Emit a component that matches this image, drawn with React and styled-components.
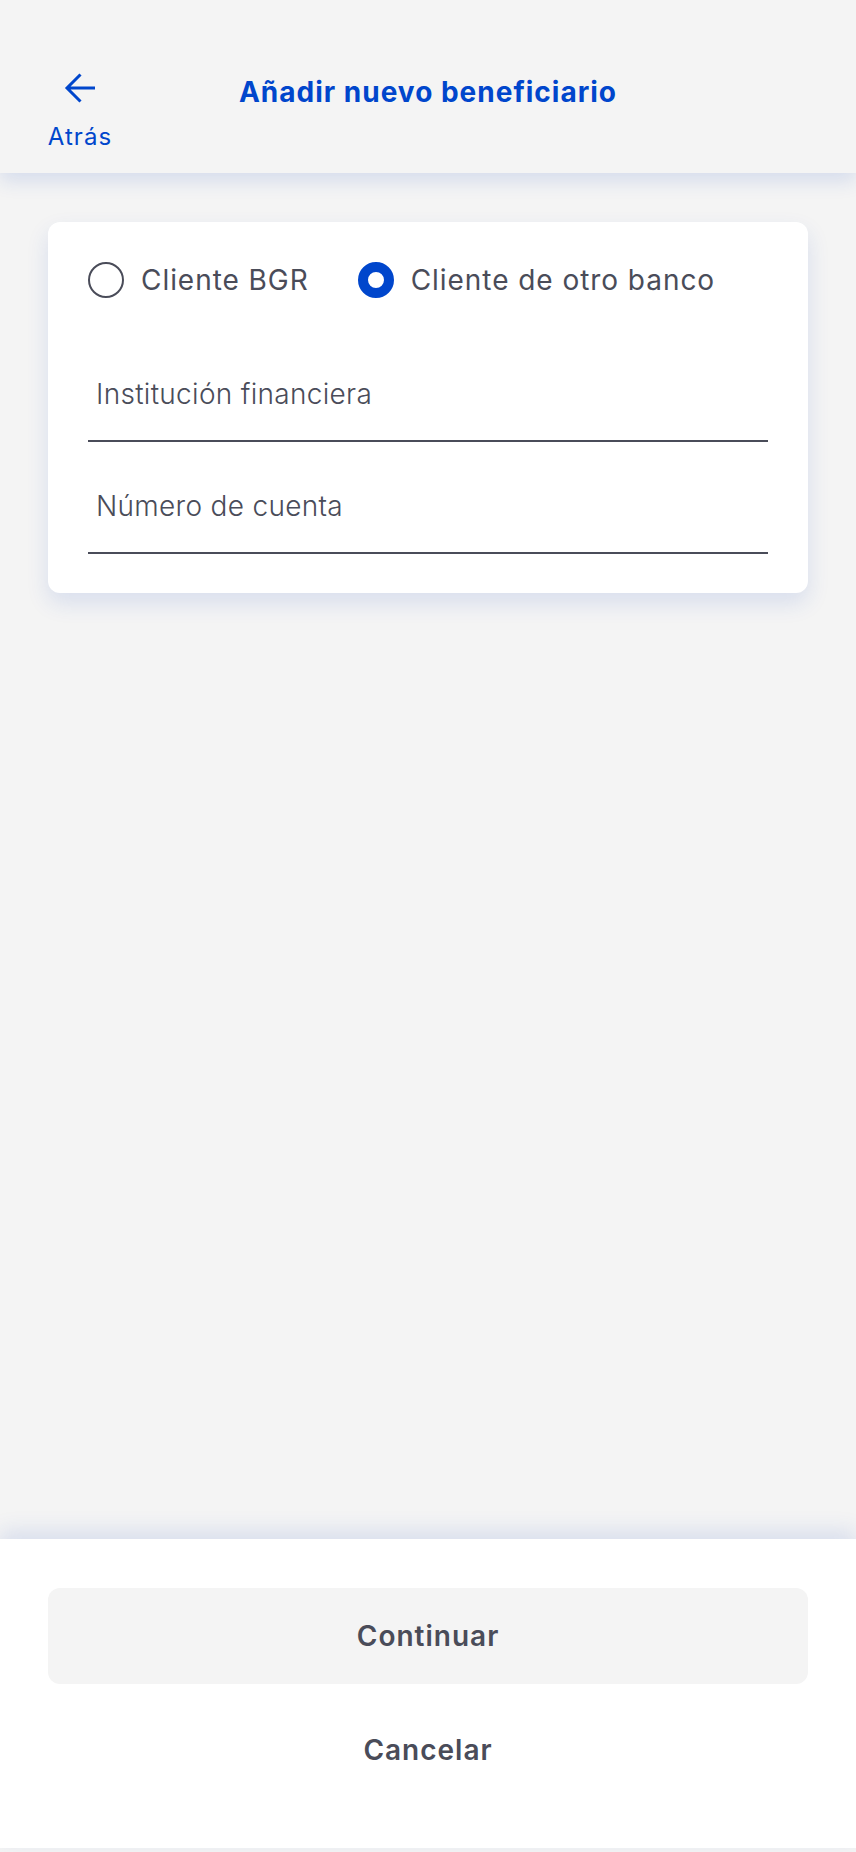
import React, { useState } from 'react';
import styled, { createGlobalStyle } from 'styled-components';

const GlobalStyle = createGlobalStyle`
  html, body {
    margin: 0;
    padding: 0;
    background: #f4f4f4;
  }
  body {
    font-family: "Inter", "Open Sans", sans-serif;
    color: #4a4c59;
  }
  * { box-sizing: border-box; }
`;

const BackArrow = () => (
    <svg width="32" height="32" viewBox="0 0 32 32" fill="none">
        <path d="M31 16H3M16.5 2.5L3 16l13.5 13.5" stroke="#0046cc" strokeWidth="3" />
    </svg>
);

const App = () => {
    const [kind, setKind] = useState("otro");

    return (
        <Page>
            <GlobalStyle />
            <Header>
                <BackButton type="button">
                    <BackArrow />
                    <BackLabel>Atrás</BackLabel>
                </BackButton>
                <Title>Añadir nuevo beneficiario</Title>
                <span />
            </Header>

            <Content>
                <Card>
                    <RadioRow>
                        <RadioOption onClick={() => setKind("bgr")}>
                            <RadioDot checked={kind === "bgr"} />
                            <span>Cliente BGR</span>
                        </RadioOption>
                        <RadioOption onClick={() => setKind("otro")}>
                            <RadioDot checked={kind === "otro"} />
                            <span>Cliente de otro banco</span>
                        </RadioOption>
                    </RadioRow>
                    <Field first>
                        <FieldInput placeholder="Institución financiera" />
                    </Field>
                    <Field>
                        <FieldInput placeholder="Número de cuenta" />
                    </Field>
                </Card>
            </Content>

            <Footer>
                <PrimaryButton type="button">Continuar</PrimaryButton>
                <GhostButton type="button">Cancelar</GhostButton>
            </Footer>
        </Page>
    );
}

export default App;

const Page = styled.div`
display: flex;
flex-direction: column;
min-height: 100vh;
background: #f4f4f4;
padding-bottom: 4px;
`;

const Header = styled.header`
display: grid;
grid-template-columns: 1fr auto 1fr;
align-items: start;
height: 173px;
padding: 72px 48px 0;
background: #f4f4f4;
box-shadow: 0 8px 18px rgba(30, 80, 190, 0.14);
position: relative;
z-index: 1;
`;

const BackButton = styled.button`
justify-self: start;
display: flex;
flex-direction: column;
align-items: center;
gap: 18px;
width: 64px;
padding: 0;
border: none;
background: none;
font-family: inherit;
cursor: pointer;
`;

const BackLabel = styled.span`
font-size: 24px;
line-height: 29px;
font-weight: 400;
color: #0046cc;
letter-spacing: 1.1px;
`;

const Title = styled.h1`
margin: 3px 0 0;
font-size: 28px;
line-height: 34px;
font-weight: 700;
color: #0046cc;
letter-spacing: 1px;
`;

const Content = styled.main`
flex: 1;
padding: 49px 48px;
`;

const Card = styled.section`
background: #fff;
border-radius: 12px;
padding: 40px 40px 39px;
box-shadow: 0 10px 22px rgba(30, 80, 190, 0.13);
`;

const RadioRow = styled.div`
display: flex;
align-items: center;
gap: 49px;
`;

const RadioOption = styled.label`
display: flex;
align-items: center;
gap: 17px;
font-size: 28px;
line-height: 34px;
font-weight: 400;
letter-spacing: 0.95px;
color: #4a4c59;
cursor: pointer;
`;

const RadioDot = styled.span`
width: 36px;
height: 36px;
border-radius: 50%;
flex-shrink: 0;
border: ${props => props.checked ? "10px solid #0046cc" : "2px solid #4a4c59"};
background: #fff;
`;

const Field = styled.div`
margin-top: ${props => props.first ? "48px" : "16px"};
height: 96px;
display: flex;
align-items: flex-end;
padding: 0 8px 29px;
border-bottom: 2px solid #4a4c59;
`;

const FieldInput = styled.input`
width: 100%;
height: 34px;
border: none;
outline: none;
background: transparent;
padding: 0;
font-family: inherit;
font-size: 28px;
line-height: 34px;
font-weight: 300;
letter-spacing: 0.3px;
color: #4a4c59;

&::placeholder {
    color: #4a4c59;
}
`;

const Footer = styled.footer`
display: flex;
flex-direction: column;
gap: 18px;
padding: 49px 48px 50px;
background: #fff;
box-shadow: 0 -8px 20px rgba(30, 80, 190, 0.13);
`;

const PrimaryButton = styled.button`
height: 96px;
border: none;
border-radius: 12px;
background: #f4f4f4;
font-family: inherit;
font-size: 28px;
line-height: 34px;
font-weight: 600;
letter-spacing: 1px;
color: #4a4c59;
cursor: pointer;
`;

const GhostButton = styled(PrimaryButton)`
background: transparent;
`;
